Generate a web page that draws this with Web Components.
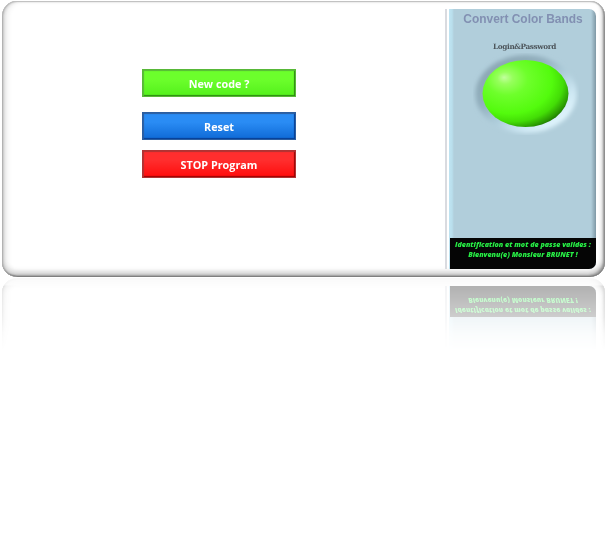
<!DOCTYPE html>
<html lang="fr">
<head>
<meta charset="utf-8">
<title>Convert Color Bands</title>
<style>
html,body{margin:0;background:#fff;height:556px;overflow:hidden}
body{padding:1px 0 0 2px;box-sizing:border-box}
</style>
</head>
<body>
<glass-window>
  <button-column slot="main">
    <bevel-button style="--hi:#6cff2c;--lo:#54f01c;--edge:#58b838;--dark:#2d8a10">New code ?</bevel-button>
    <bevel-button style="--hi:#2a8cf4;--lo:#0f6ad6;--edge:#2c5ea0;--dark:#073f94;--gap:15px">Reset</bevel-button>
    <bevel-button style="--hi:#ff2e2e;--lo:#ff0c0c;--edge:#b03434;--dark:#9c0404;--gap:10px">STOP Program</bevel-button>
  </button-column>
  <side-panel slot="side">
    <span slot="title">Convert Color Bands</span>
    <span slot="label">Login&amp;Password</span>
    <round-lamp slot="lamp"></round-lamp>
    <status-display slot="status"><span>Identification et mot de passe valides :</span><span>Bienvenu(e) Monsieur BRUNET !</span></status-display>
  </side-panel>
</glass-window>
<script>
const define = (name, html) => customElements.define(name, class extends HTMLElement {
  constructor() {
    super();
    this.attachShadow({ mode: 'open' }).innerHTML = html;
  }
});

define('glass-window', `
<style>
:host{display:flex;box-sizing:border-box;width:603px;height:276px;padding:8px 9px 8px 8px;border-radius:15px;background:#fff;
 box-shadow:inset 0 1px 1px #c0c0c0,inset 1px 0 1px #b0b0b0,inset -1px 0 1px #888,inset 0 -1px 1px #757575,inset -2px -2px 2px #a0a0a0,inset 2px 0 3px #c6c6c6,inset -3px -4px 4px #d0d0d0,inset 0 -6px 5px #e2e2e2,inset 6px 0 5px #f0f0f0;
 -webkit-box-reflect:below 1px linear-gradient(to bottom,transparent 203px,rgba(0,0,0,.06) 220px,rgba(0,0,0,.2) 237px,rgba(0,0,0,.31) 268px,rgba(0,0,0,.12) 269px,rgba(0,0,0,.05) 276px)}
main{flex:1}
.rule{width:2px;margin-right:2px;background:#d9dbe0}
</style>
<main><slot name="main"></slot></main><div class="rule"></div><slot name="side"></slot>`);

define('button-column', `
<style>:host{display:flex;flex-direction:column;width:154px;padding:60px 0 0 132px}</style><slot></slot>`);

define('bevel-button', `
<style>
:host{display:block;margin-top:var(--gap,0)}
button{display:flex;align-items:center;justify-content:center;box-sizing:border-box;width:154px;height:28px;padding:2px 0 0;border:1px solid var(--edge);
 background:linear-gradient(var(--hi) 35%,var(--lo));box-shadow:inset 1px 1px 1px var(--edge),inset -1px -1px 1px var(--dark);
 color:#fff;font:bold 10.8px/14px "Open Sans","Noto Sans",sans-serif;white-space:nowrap}
</style><button><slot></slot></button>`);

define('side-panel', `
<style>
:host{display:flex;flex-direction:column;align-items:center;box-sizing:border-box;width:147px;height:260px;overflow:hidden;border-radius:0 7px 7px 0;
 background:linear-gradient(90deg,#bfe4f2 0,#b9dfed 3px,#b1cedb 5px,#b1cedb 142px,#7f98a5 147px);color:#8290b2}
.title{font:bold 11.95px/14px "Liberation Sans",Arial,sans-serif;margin:3px 0 0 1px;white-space:nowrap}
.label{font:bold 7.3px/10px "DejaVu Serif",serif;letter-spacing:-.37px;color:#4d555b;margin:16px 0 0 4px;white-space:nowrap}
.lamp{margin:1px 0 0 6px}
.status{margin-top:auto;align-self:stretch}
</style>
<div class="title"><slot name="title"></slot></div>
<div class="label"><slot name="label"></slot></div>
<div class="lamp"><slot name="lamp"></slot></div>
<div class="status"><slot name="status"></slot></div>`);

define('round-lamp', `
<style>:host,svg{display:block}</style>
<svg width="106" height="82" viewBox="0 0 106 82">
<defs>
<linearGradient id="ring" x1=".15" y1=".12" x2=".87" y2=".87">
<stop offset="0" stop-color="#8ba6b4"/><stop offset=".3" stop-color="#92afbd"/><stop offset=".53" stop-color="#abcad8"/><stop offset=".78" stop-color="#cde7f3"/><stop offset="1" stop-color="#e4f8ff"/></linearGradient>
<radialGradient id="ball" cx=".36" cy=".34" r=".75" fx=".25" fy=".26">
<stop offset="0" stop-color="#c2ff9e"/><stop offset=".12" stop-color="#96ff5c"/><stop offset=".32" stop-color="#6eff2b"/><stop offset=".65" stop-color="#53fb0d"/><stop offset=".8" stop-color="#43dd06"/><stop offset=".92" stop-color="#299802"/><stop offset="1" stop-color="#145600"/></radialGradient>
<filter id="soft" x="-10%" y="-10%" width="120%" height="120%"><feGaussianBlur stdDeviation="2"/></filter>
</defs>
<ellipse cx="53" cy="41" rx="50.5" ry="39" fill="url(#ring)" filter="url(#soft)"/>
<ellipse cx="52.5" cy="40.5" rx="43" ry="33.5" fill="url(#ball)"/>
</svg>`);

define('status-display', `
<style>
:host{display:flex;flex-direction:column;align-items:center;box-sizing:border-box;height:31px;margin-left:1px;padding-top:2px;background:#050505;color:#27ee45;
 font:italic 800 7.1px/9.5px "Open Sans","Noto Sans",sans-serif;white-space:nowrap}
</style><slot></slot>`);
</script>
</body>
</html>
